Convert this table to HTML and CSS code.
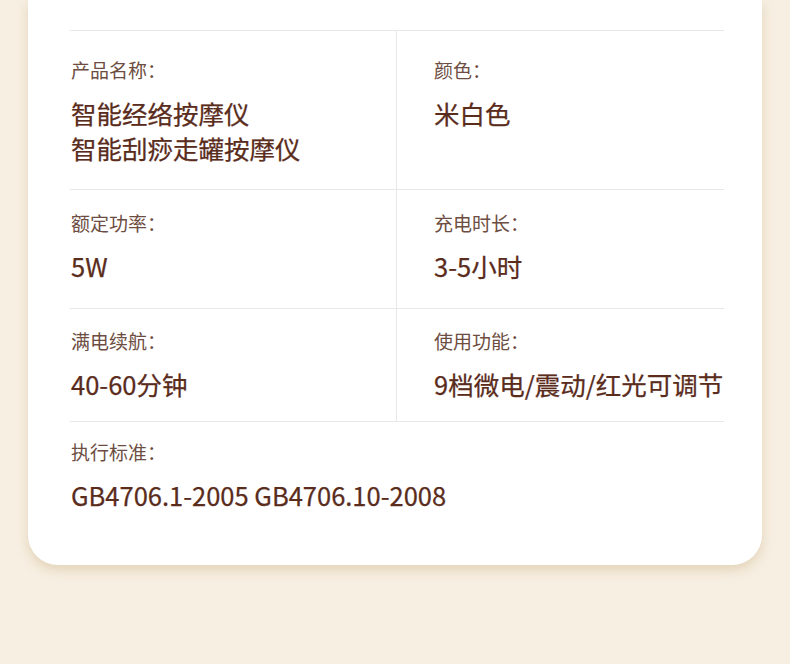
FILE: index.html
```html
<!DOCTYPE html>
<html lang="zh-CN">
<head>
  <meta charset="UTF-8">
  <title>产品参数</title>
  <link rel="stylesheet" href="styles.css">
</head>
<body>
  <div class="page">
    <div class="card">
      <div class="specs">
        <div class="spec first left">
          <div class="label">产品名称：</div>
          <div class="value">智能经络按摩仪<br>智能刮痧走罐按摩仪</div>
        </div>
        <div class="spec first right">
          <div class="label">颜色：</div>
          <div class="value">米白色</div>
        </div>

        <div class="spec second left">
          <div class="label">额定功率：</div>
          <div class="value">5W</div>
        </div>
        <div class="spec second right">
          <div class="label">充电时长：</div>
          <div class="value">3-5小时</div>
        </div>

        <div class="spec third left">
          <div class="label">满电续航：</div>
          <div class="value">40-60分钟</div>
        </div>
        <div class="spec third right">
          <div class="label">使用功能：</div>
          <div class="value">9档微电/震动/红光可调节</div>
        </div>

        <div class="spec full">
          <div class="label">执行标准：</div>
          <div class="value">GB4706.1-2005 GB4706.10-2008</div>
        </div>
      </div>
    </div>
  </div>
</body>
</html>
```

FILE: styles.css
```css
html, body { margin: 0; padding: 0; }
body {
  background: #f7efe2;
  font-family: "Noto Sans CJK SC", "Noto Sans", sans-serif;
  color: #5a2c1c;
}
.page { padding: 0 28px 99px; }
.card {
  background: #fff;
  border-radius: 0 0 30px 30px;
  padding: 30px 38px 53px 42px;
  box-shadow: 0 5px 12px rgba(190, 160, 110, 0.35);
}
.specs {
  display: grid;
  grid-template-columns: 1fr 1fr;
  border-top: 1px solid #e8e8e8;
}
.spec { border-bottom: 1px solid #e8e8e8; }
.spec.first { padding-top: 27px; padding-bottom: 24px; }
.spec.second { padding-top: 21px; padding-bottom: 25px; }
.spec.third { padding-top: 20px; padding-bottom: 20px; }
.spec.left { padding-left: 1px; border-right: 1px solid #e8e8e8; }
.spec.right { padding-left: 37px; }
.spec.full { grid-column: 1 / 3; border-bottom: none; padding: 18px 0 0 1px; }
.label {
  font-size: 19px;
  line-height: 24px;
  color: #6d4d41;
  margin-bottom: 13px;
}
.value {
  font-size: 25.5px;
  line-height: 35px;
  font-weight: 400;
  color: #5a2c1c;
  white-space: nowrap;
  -webkit-text-stroke: 0.25px #5a2c1c;
}
```
